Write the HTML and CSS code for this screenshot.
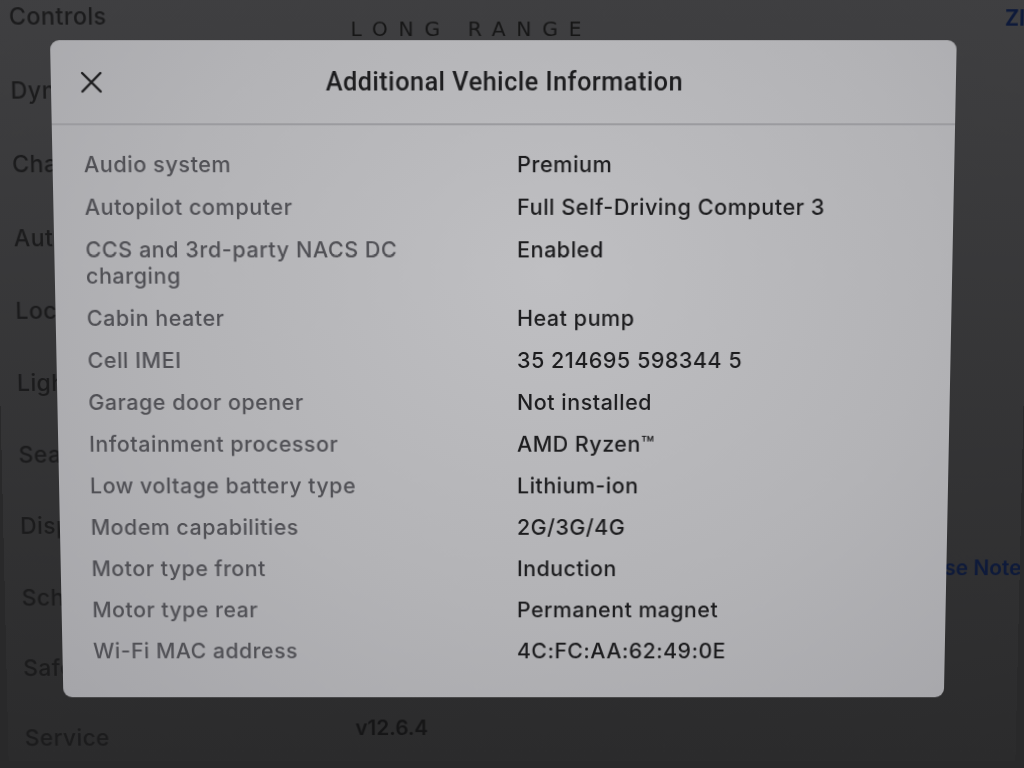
FILE: index.html
```html
<!DOCTYPE html>
<html lang="en">
<head>
  <meta charset="UTF-8">
  <meta name="viewport" content="width=device-width, initial-scale=1.0">
  <title>Additional Vehicle Information</title>
  <link rel="stylesheet" href="styles.css">
</head>
<body>
  <div class="stage">
    <div class="screen">
      <ul class="nav">
        <li>Controls</li>
        <li>Dynamics</li>
        <li>Charging</li>
        <li>Autopilot</li>
        <li>Locks</li>
        <li>Lights</li>
        <li>Seats</li>
        <li>Display</li>
        <li>Schedule</li>
        <li>Safety</li>
        <li>Service</li>
      </ul>

      <div class="software">
        <div class="trim">LONG RANGE</div>
        <div class="version">v12.6.4</div>
      </div>

      <div class="side">
        <div class="link">ZI</div>
        <div class="link notes">Release Notes</div>
      </div>
    </div>

    <div class="modal">
      <div class="modal-header">
        <button class="close" aria-label="Close">
          <svg width="22" height="22" viewBox="0 0 22 22">
            <path d="M2 2 L20 20 M20 2 L2 20" stroke="#1c1c1e" stroke-width="2.4" stroke-linecap="round"/>
          </svg>
        </button>
        <h1>Additional Vehicle Information</h1>
      </div>

      <dl class="info">
        <dt>Audio system</dt><dd>Premium</dd>
        <dt>Autopilot computer</dt><dd>Full Self-Driving Computer 3</dd>
        <dt>CCS and 3rd-party NACS DC charging</dt><dd>Enabled</dd>
        <dt>Cabin heater</dt><dd>Heat pump</dd>
        <dt>Cell IMEI</dt><dd>35 214695 598344 5</dd>
        <dt>Garage door opener</dt><dd>Not installed</dd>
        <dt>Infotainment processor</dt><dd>AMD Ryzen™</dd>
        <dt>Low voltage battery type</dt><dd>Lithium-ion</dd>
        <dt>Modem capabilities</dt><dd>2G/3G/4G</dd>
        <dt>Motor type front</dt><dd>Induction</dd>
        <dt>Motor type rear</dt><dd>Permanent magnet</dd>
        <dt>Wi-Fi MAC address</dt><dd>4C:FC:AA:62:49:0E</dd>
      </dl>
    </div>
  </div>
</body>
</html>
```

FILE: styles.css
```css
html, body {
  margin: 0;
  height: 100%;
}
html {
  background: #29292a;
}
body {
  font-family: Inter, "Open Sans", sans-serif;
  overflow: hidden;
}
/* the screen is photographed at a slight tilt */
.stage {
  position: relative;
  width: 1024px;
  height: 768px;
  background: linear-gradient(#3f3f41, #2b2b2c);
  transform: perspective(1000px) rotateX(-2.56deg);
  overflow: hidden;
}
.screen {
  display: flex;
  height: 768px;
}
.nav {
  list-style: none;
  margin: 0;
  padding: 8px 0 0 17px;
  width: 330px;
  box-sizing: border-box;
  flex: none;
  display: flex;
  flex-direction: column;
  gap: 44.2px;
}
.nav li {
  font-size: 23px;
  line-height: 28px;
  font-weight: 500;
  letter-spacing: 0.4px;
  color: #1b1b1c;
}
.software {
  width: 620px;
  box-sizing: border-box;
  flex: none;
  display: flex;
  flex-direction: column;
  justify-content: space-between;
  padding: 23px 0 21px 23px;
}
.trim {
  font-family: "DejaVu Sans", sans-serif;
  font-size: 20px;
  font-weight: 400;
  letter-spacing: 10.5px;
  color: #161616;
  line-height: 22px;
}
.version {
  font-size: 21px;
  font-weight: 600;
  color: #151516;
  line-height: 26px;
}
.side {
  flex: 1;
  padding: 11px 0 0 47px;
  display: flex;
  flex-direction: column;
  gap: 520px;
}
.link {
  color: #0e1a3a;
  font-size: 21px;
  font-weight: 700;
  line-height: 26px;
  white-space: nowrap;
}
.notes {
  margin-left: -105px;
  font-weight: 600;
}

.modal {
  position: absolute;
  left: 57px;
  top: 45px;
  width: 893px;
  height: 657px;
  border-radius: 9px;
  background: radial-gradient(ellipse at 55% 35%, #bfbfc2 0%, #b3b3b6 55%, #a5a5a9 100%);
}
.modal-header {
  height: 81px;
  border-bottom: 2px solid #9b9b9f;
  display: flex;
  align-items: center;
  justify-content: center;
  position: relative;
}
.close {
  position: absolute;
  left: 29px;
  top: 30px;
  background: none;
  border: none;
  padding: 0;
  width: 22px;
  height: 22px;
  display: flex;
}
.modal-header h1 {
  margin: 0 0 0 2px;
  font-family: Roboto, sans-serif;
  font-size: 25px;
  font-weight: 500;
  color: #1d1d1f;
  letter-spacing: 0.45px;
}
.info {
  margin: 0;
  padding: 25px 30px 0 31px;
  display: grid;
  grid-template-columns: 429px 1fr;
  row-gap: 16px;
}
.info dt, .info dd {
  margin: 0;
  font-size: 21.5px;
  line-height: 26px;
  font-weight: 500;
  letter-spacing: 0.5px;
}
.info dt {
  color: #505055;
  max-width: 345px;
}
.info dd {
  color: #1c1c1e;
}
```
